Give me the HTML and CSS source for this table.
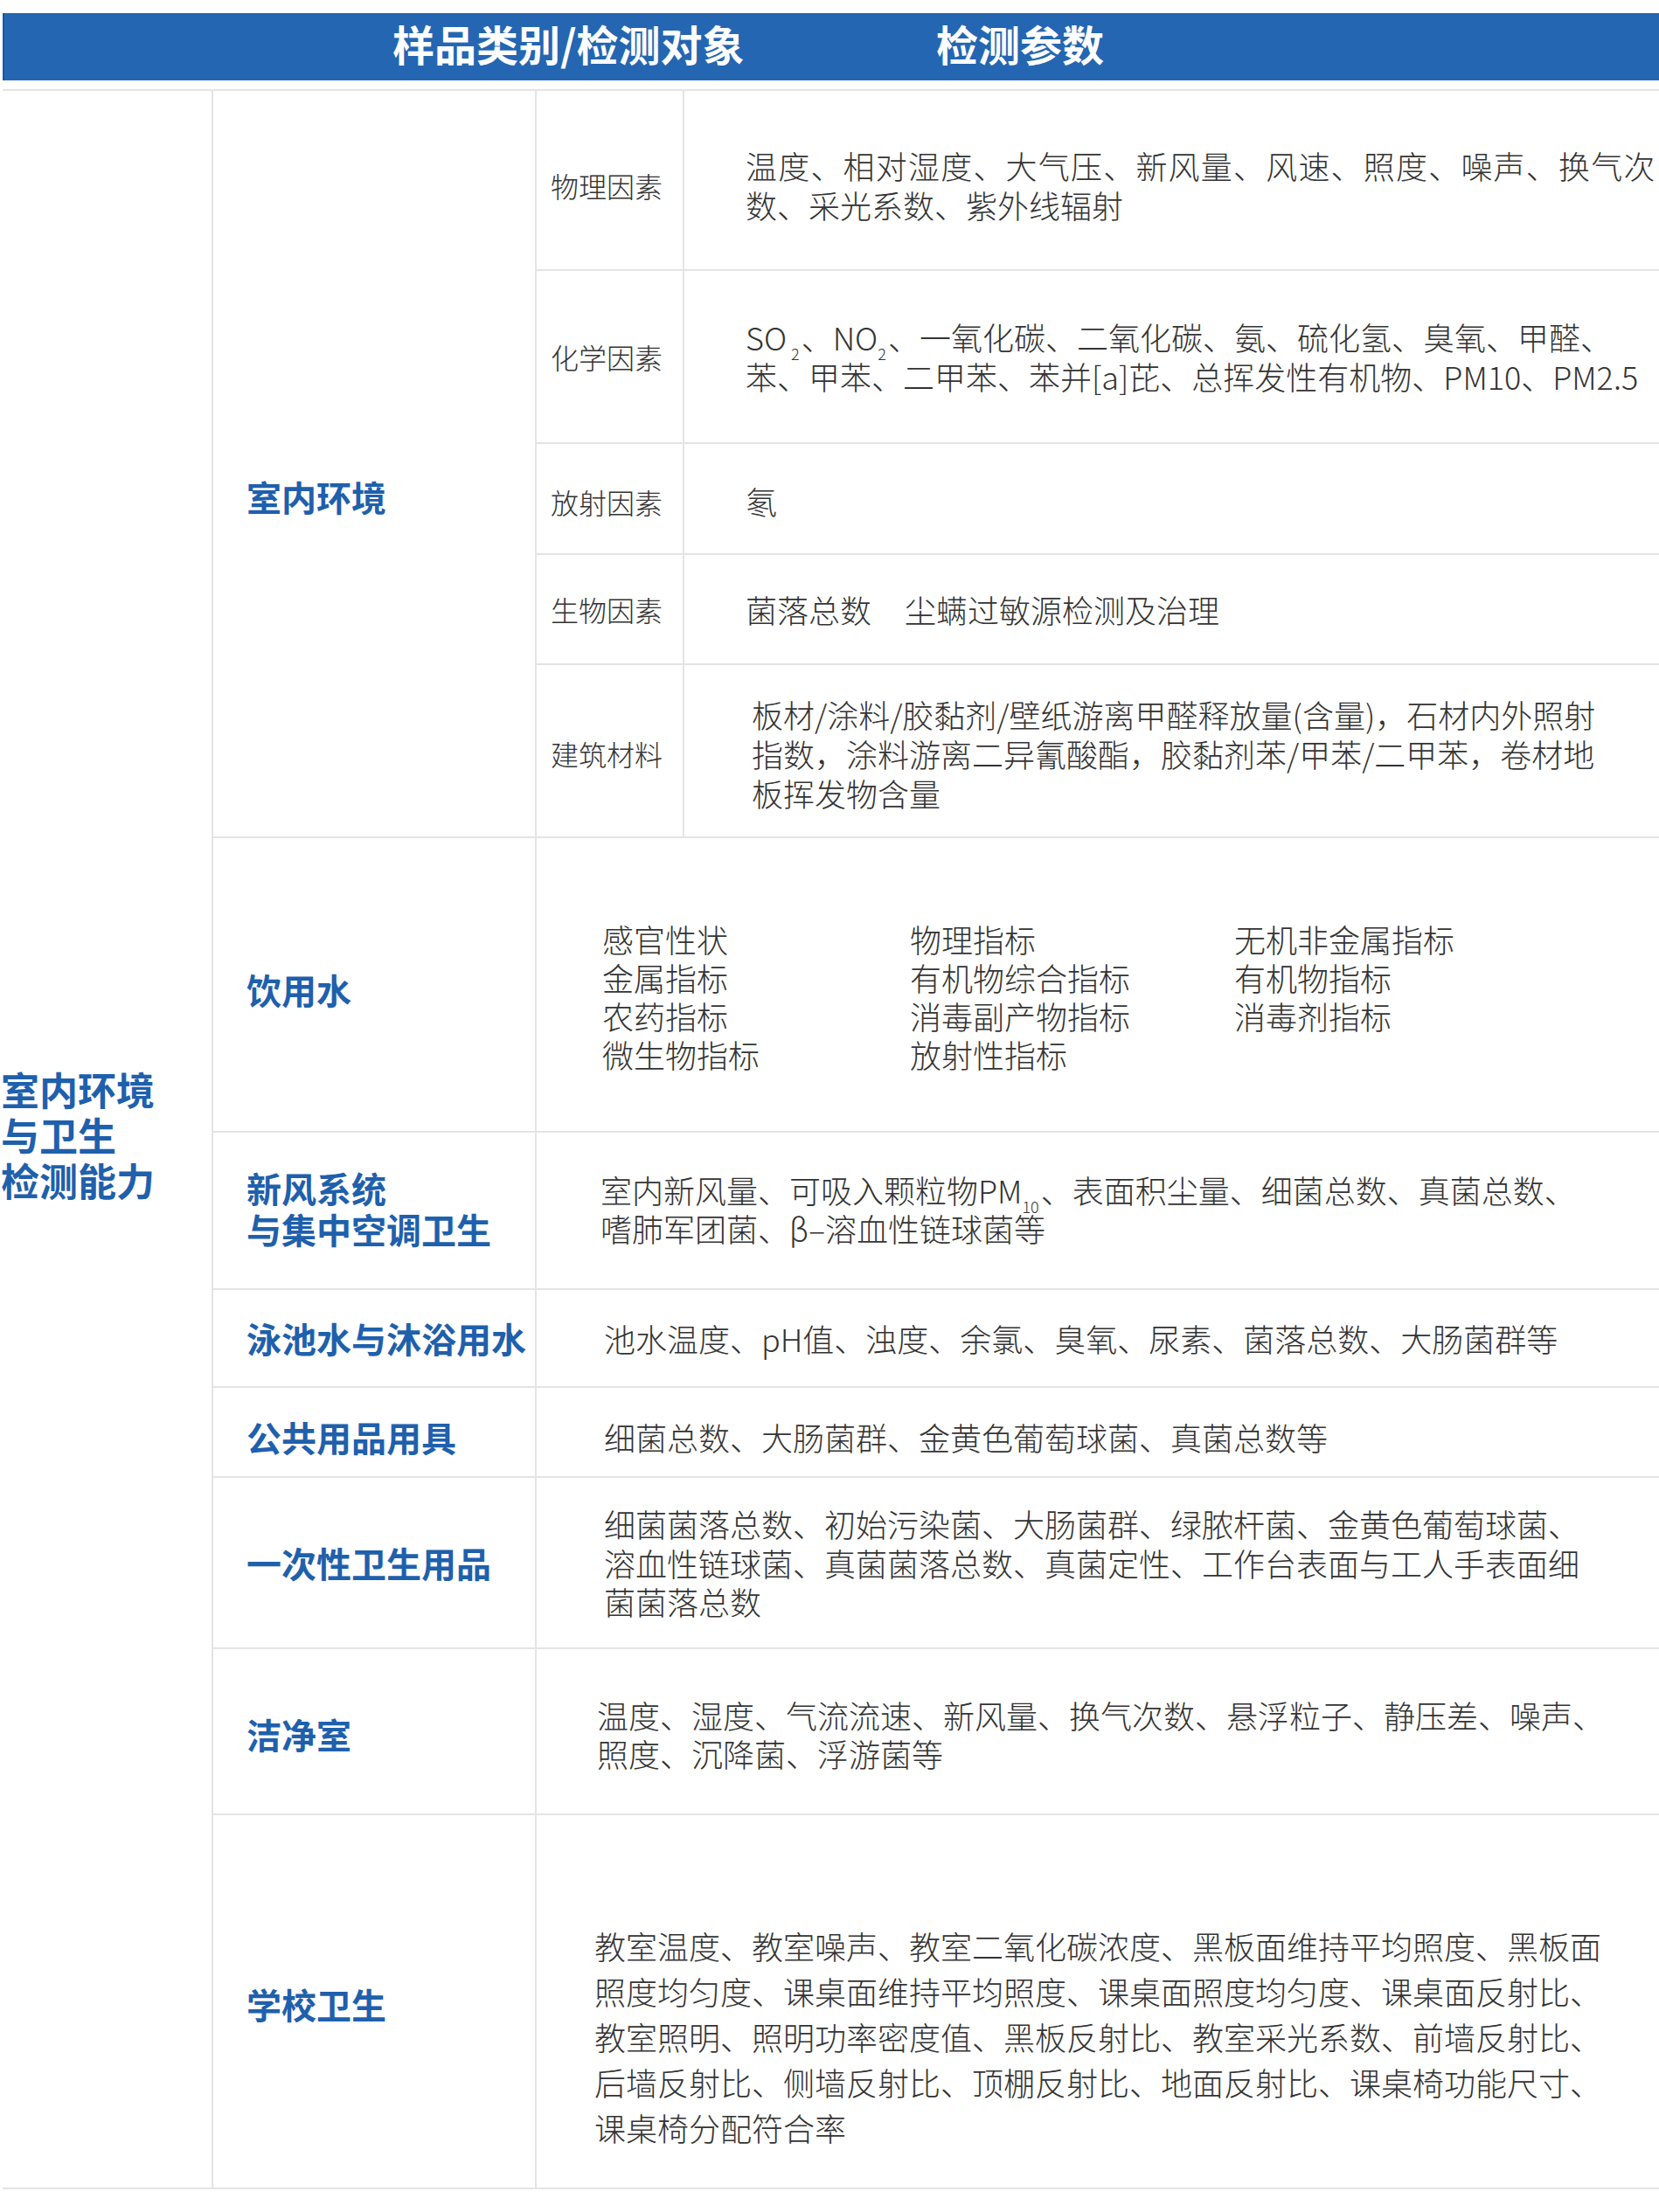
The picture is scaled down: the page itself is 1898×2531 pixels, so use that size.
FILE: index.html
```html
<!DOCTYPE html>
<html lang="zh-CN">
<head>
<meta charset="utf-8">
<title>室内环境与卫生检测能力</title>
<link rel="stylesheet" href="styles.css">
</head>
<body>
<div class="page">
  <div class="header">
    <span class="h-cat">样品类别/检测对象</span>
    <span class="h-param">检测参数</span>
  </div>

  <div class="table">
    <div class="cell cat"><div class="cat-text">室内环境<br>与卫生<br>检测能力</div></div>
    <div class="cell label l-indoor">室内环境</div>

    <div class="cell sub r1">物理因素</div>
    <div class="cell val r1"><div><span class="spread">温度、相对湿度、大气压、新风量、风速、照度、噪声、换气次</span><br>数、采光系数、紫外线辐射</div></div>

    <div class="cell sub">化学因素</div>
    <div class="cell val"><div>SO<sub class="s s-gap">2</sub>、NO<sub class="s">2</sub>、一氧化碳、二氧化碳、氨、硫化氢、臭氧、甲醛、<br>苯、甲苯、二甲苯、苯并[a]芘、总挥发性有机物、PM10、PM2.5</div></div>

    <div class="cell sub r3">放射因素</div>
    <div class="cell val r3"><div>氡</div></div>

    <div class="cell sub">生物因素</div>
    <div class="cell val"><div>菌落总数<span class="em-gap"></span>尘螨过敏源检测及治理</div></div>

    <div class="cell sub r5">建筑材料</div>
    <div class="cell val build r5"><div>板材/涂料/胶黏剂/壁纸游离甲醛释放量(含量)，石材内外照射<br>指数，涂料游离二异氰酸酯，胶黏剂苯/甲苯/二甲苯，卷材地<br>板挥发物含量</div></div>

    <div class="cell label l-water">饮用水</div>
    <div class="cell full water">
      <div class="water-grid">
        <span>感官性状</span><span>物理指标</span><span>无机非金属指标</span>
        <span>金属指标</span><span>有机物综合指标</span><span>有机物指标</span>
        <span>农药指标</span><span>消毒副产物指标</span><span>消毒剂指标</span>
        <span>微生物指标</span><span>放射性指标</span><span></span>
      </div>
    </div>

    <div class="cell label l-two">新风系统<br>与集中空调卫生</div>
    <div class="cell full fresh"><div>室内新风量、可吸入颗粒物PM<sub class="s">10</sub>、表面积尘量、细菌总数、真菌总数、<br>嗜肺军团菌、β–溶血性链球菌等</div></div>

    <div class="cell label">泳池水与沐浴用水</div>
    <div class="cell full"><div>池水温度、pH值、浊度、余氯、臭氧、尿素、菌落总数、大肠菌群等</div></div>

    <div class="cell label r-public">公共用品用具</div>
    <div class="cell full r-public"><div>细菌总数、大肠菌群、金黄色葡萄球菌、真菌总数等</div></div>

    <div class="cell label">一次性卫生用品</div>
    <div class="cell full"><div>细菌菌落总数、初始污染菌、大肠菌群、绿脓杆菌、金黄色葡萄球菌、<br>溶血性链球菌、真菌菌落总数、真菌定性、工作台表面与工人手表面细<br>菌菌落总数</div></div>

    <div class="cell label r-clean">洁净室</div>
    <div class="cell full clean r-clean"><div>温度、湿度、气流流速、新风量、换气次数、悬浮粒子、静压差、噪声、<br>照度、沉降菌、浮游菌等</div></div>

    <div class="cell label l-school">学校卫生</div>
    <div class="cell full school"><div>教室温度、教室噪声、教室二氧化碳浓度、黑板面维持平均照度、黑板面<br>照度均匀度、课桌面维持平均照度、课桌面照度均匀度、课桌面反射比、<br>教室照明、照明功率密度值、黑板反射比、教室采光系数、前墙反射比、<br>后墙反射比、侧墙反射比、顶棚反射比、地面反射比、课桌椅功能尺寸、<br>课桌椅分配符合率</div></div>
  </div>
</div>
</body>
</html>
```

FILE: styles.css
```css
html, body {
  margin: 0;
  padding: 0;
  background: #ffffff;
}

body {
  font-family: "Noto Sans CJK SC", "Noto Sans", sans-serif;
  color: #333333;
}

.page {
  width: 1898px;
  height: 2531px;
  overflow: hidden;
  background: #ffffff;
}

/* ---------- header bar ---------- */
.header {
  margin: 15px 0 0 3px;
  height: 77px;
  box-sizing: border-box;
  padding-bottom: 9px;
  background: #2466b1;
  border-left: 2px solid #1b56a0;
  display: grid;
  grid-template-columns: 444px 622px auto;
  align-items: center;
  color: #ffffff;
  font-size: 48px;
  font-weight: 700;
  line-height: 1;
  white-space: nowrap;
}

.h-cat {
  grid-column: 2;
}

.h-param {
  grid-column: 3;
}

/* ---------- table grid ---------- */
.table {
  margin: 10px 0 0 3px;
  width: 2180px;
  display: grid;
  grid-template-columns: 239px 368px 167px 1400px;
  grid-template-rows: 204px 196px 125px 124px 196px 335px 178px 110px 101px 194px 188px 426px;
  gap: 2px;
  padding: 2px 0;
  background: #e4e4e4;
}

.cell {
  background: #ffffff;
  display: flex;
  align-items: center;
  white-space: nowrap;
  box-sizing: border-box;
}

.cat {
  grid-column: 1;
  grid-row: 1 / span 12;
  color: #1f60ac;
  font-size: 44px;
  font-weight: 700;
  line-height: 52px;
  padding-bottom: 12px;
}

.cat-text {
  margin-left: -2px;
}

.label {
  grid-column: 2;
  padding-left: 38px;
  color: #1f60ac;
  font-size: 40px;
  font-weight: 700;
  line-height: 47px;
}

.l-indoor {
  grid-row: 1 / span 5;
  padding-top: 76px;
}

.sub {
  grid-column: 3;
  padding-left: 16px;
  font-size: 32px;
  font-weight: 300;
  line-height: 40px;
  color: #333333;
}

.val {
  grid-column: 4;
  padding-left: 70px;
  font-size: 36px;
  font-weight: 300;
  line-height: 45px;
  color: #333333;
}

.full {
  grid-column: 3 / span 2;
  padding-left: 77px;
  font-size: 36px;
  font-weight: 300;
  line-height: 44.5px;
  color: #333333;
}

.build {
  padding-left: 77px;
}

.fresh {
  padding-left: 73px;
  padding-bottom: 4px;
}

.clean {
  padding-left: 69px;
}

.school {
  padding-left: 66px;
  line-height: 52px;
  padding-top: 80px;
}

.spread {
  letter-spacing: 1.2px;
}

.em-gap {
  display: inline-block;
  width: 38px;
}

/* vertical nudges measured from the reference */
.r1 {
  padding-top: 12px;
}

.r3,
.r5 {
  padding-top: 6px;
}

.r-public {
  padding-top: 12px;
}

.r-clean {
  padding-top: 6px;
}

.l-water {
  padding-top: 11px;
}

.l-two {
  padding-bottom: 4px;
}

.l-school {
  padding-top: 6px;
}

.water {
  padding-left: 75px;
  padding-top: 27px;
}

.water-grid {
  display: grid;
  grid-template-columns: 352px 371px auto;
  line-height: 44px;
}

.s {
  font-size: 18px;
  vertical-align: -11px;
  line-height: 0;
  margin-right: 2px;
}

.s-gap {
  margin-left: 5px;
}
```
